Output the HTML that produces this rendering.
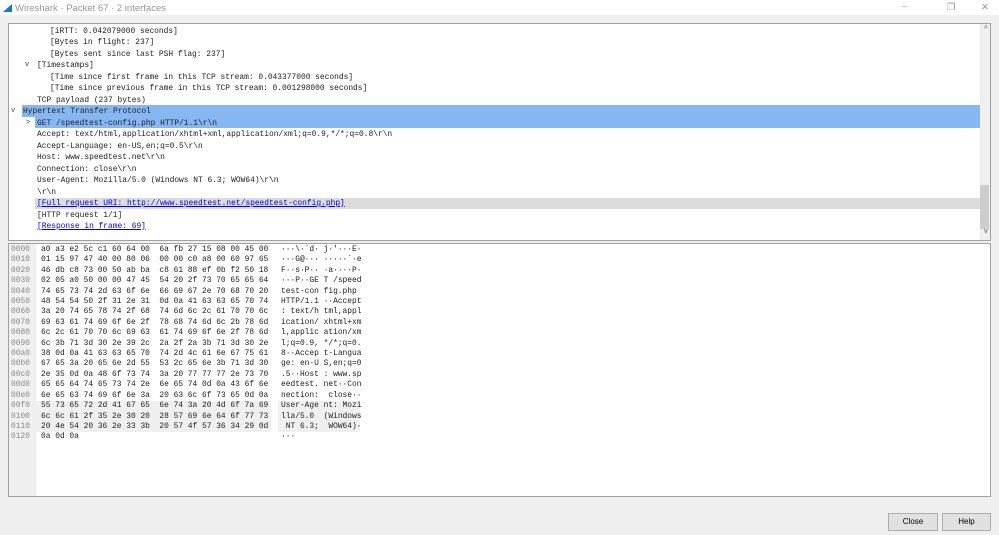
<!DOCTYPE html>
<html><head><meta charset="utf-8"><style>
*{margin:0;padding:0;box-sizing:border-box}
body{width:999px;height:535px;background:#f0f0f0;position:relative;overflow:hidden;font-family:"Liberation Mono",monospace}
.title{position:absolute;left:0;top:0;width:999px;height:15px;background:#fff}
.title span{position:absolute;left:15px;top:3px;font:9.5px "Liberation Sans",sans-serif;color:#999}
.pane{position:absolute;background:#fff;border:1px solid #a0a0a0}
.r{position:absolute;height:11.5px;line-height:13px;font-size:7.9px;color:#222;white-space:pre}
.sel{background:#86b7f3}
.gr{background:#dcdcdc}
a{color:#0000ee;text-decoration:underline}
.h{position:absolute;font-size:7.9px;line-height:10.4px;white-space:pre;color:#222}
.btn{position:absolute;top:513px;height:18px;background:#e1e1e1;border:1px solid #adadad;font:8px "Liberation Sans",sans-serif;text-align:center;line-height:16px;color:#000}
.ar{position:absolute;font-size:7px;color:#444;line-height:12px}
</style></head><body>
<div class="title"><svg style="position:absolute;left:3px;top:3px" width="10" height="9"><path d="M0 9 L9 1 L9 9 Z" fill="#1679c2"/></svg><span>Wireshark · Packet 67 · 2 interfaces</span>
<span style="left:902px;top:1px;color:#999">–</span><span style="left:947px;top:2px;color:#999">❐</span><span style="left:981px;top:2px;color:#999">✕</span></div>

<div class="pane" style="left:8px;top:23px;width:983px;height:218px;overflow:hidden">
<div style="position:absolute;right:0;top:0;width:10px;height:216px;background:#f0f0f0"></div>
<div style="position:absolute;right:1px;top:161px;width:9px;height:44px;background:#cdcdcd"></div>
<div style="position:absolute;right:2px;top:1px;font-size:7px;color:#555">^</div>
<div style="position:absolute;right:2px;top:204px;font-size:7px;color:#555">v</div>
</div>
<div class="r sel" style="left:22px;top:105px;width:958px"></div>
<div class="r sel" style="left:35px;top:116.5px;width:945px"></div>
<div class="r gr" style="left:35px;top:197.5px;width:945px"></div>
<div class="r" style="left:50px;top:24.5px">[iRTT: 0.042079000 seconds]</div>
<div class="r" style="left:50px;top:36px">[Bytes in flight: 237]</div>
<div class="r" style="left:50px;top:47.5px">[Bytes sent since last PSH flag: 237]</div>
<div class="ar" style="left:25px;top:59px">v</div>
<div class="r" style="left:37px;top:59px">[Timestamps]</div>
<div class="r" style="left:50px;top:70.5px">[Time since first frame in this TCP stream: 0.043377000 seconds]</div>
<div class="r" style="left:50px;top:82px">[Time since previous frame in this TCP stream: 0.001298000 seconds]</div>
<div class="r" style="left:37px;top:93.5px">TCP payload (237 bytes)</div>
<div class="ar" style="left:11px;top:105px">v</div>
<div class="r" style="left:23px;top:105px">Hypertext Transfer Protocol</div>
<div class="ar" style="left:26px;top:116.5px">&gt;</div>
<div class="r" style="left:37px;top:116.5px">GET /speedtest-config.php HTTP/1.1\r\n</div>
<div class="r" style="left:37px;top:128px">Accept: text/html,application/xhtml+xml,application/xml;q=0.9,*/*;q=0.8\r\n</div>
<div class="r" style="left:37px;top:139.5px">Accept-Language: en-US,en;q=0.5\r\n</div>
<div class="r" style="left:37px;top:151px">Host: www.speedtest.net\r\n</div>
<div class="r" style="left:37px;top:162.5px">Connection: close\r\n</div>
<div class="r" style="left:37px;top:174px">User-Agent: Mozilla/5.0 (Windows NT 6.3; WOW64)\r\n</div>
<div class="r" style="left:37px;top:185.5px">\r\n</div>
<div class="r" style="left:37px;top:197px"><a>[Full request URI: http://www.speedtest.net/speedtest-config.php]</a></div>
<div class="r" style="left:37px;top:208.5px">[HTTP request 1/1]</div>
<div class="r" style="left:37px;top:220px"><a>[Response in frame: 69]</a></div>

<div class="pane" style="left:8px;top:243px;width:983px;height:254px"></div>
<div style="position:absolute;left:9px;top:244px;width:27px;height:252px;background:#f0f0f0"></div>
<div style="position:absolute;left:36px;top:401px;width:235px;height:31px;background:#f0f0f0"></div>
<div style="position:absolute;left:278px;top:401px;width:82px;height:31px;background:#f0f0f0"></div>
<div class="h" style="left:11px;top:245px;color:#888">0000
0010
0020
0030
0040
0050
0060
0070
0080
0090
00a0
00b0
00c0
00d0
00e0
00f0
0100
0110
0120</div>
<div class="h" style="left:41px;top:245px">a0 a3 e2 5c c1 60 64 00  6a fb 27 15 08 00 45 00
01 15 97 47 40 00 80 06  00 00 c0 a8 00 60 97 65
46 db c8 73 00 50 ab ba  c8 61 88 ef 0b f2 50 18
02 05 a0 50 00 00 47 45  54 20 2f 73 70 65 65 64
74 65 73 74 2d 63 6f 6e  66 69 67 2e 70 68 70 20
48 54 54 50 2f 31 2e 31  0d 0a 41 63 63 65 70 74
3a 20 74 65 78 74 2f 68  74 6d 6c 2c 61 70 70 6c
69 63 61 74 69 6f 6e 2f  78 68 74 6d 6c 2b 78 6d
6c 2c 61 70 70 6c 69 63  61 74 69 6f 6e 2f 78 6d
6c 3b 71 3d 30 2e 39 2c  2a 2f 2a 3b 71 3d 30 2e
38 0d 0a 41 63 63 65 70  74 2d 4c 61 6e 67 75 61
67 65 3a 20 65 6e 2d 55  53 2c 65 6e 3b 71 3d 30
2e 35 0d 0a 48 6f 73 74  3a 20 77 77 77 2e 73 70
65 65 64 74 65 73 74 2e  6e 65 74 0d 0a 43 6f 6e
6e 65 63 74 69 6f 6e 3a  20 63 6c 6f 73 65 0d 0a
55 73 65 72 2d 41 67 65  6e 74 3a 20 4d 6f 7a 69
6c 6c 61 2f 35 2e 30 20  28 57 69 6e 64 6f 77 73
20 4e 54 20 36 2e 33 3b  20 57 4f 57 36 34 29 0d
0a 0d 0a</div>
<div class="h" style="left:281px;top:245px">···\·`d· j·'···E·
···G@··· ·····`·e
F··s·P·· ·a····P·
···P··GE T /speed
test-con fig.php 
HTTP/1.1 ··Accept
: text/h tml,appl
ication/ xhtml+xm
l,applic ation/xm
l;q=0.9, */*;q=0.
8··Accep t-Langua
ge: en-U S,en;q=0
.5··Host : www.sp
eedtest. net··Con
nection:  close··
User-Age nt: Mozi
lla/5.0  (Windows
 NT 6.3;  WOW64)·
···</div>

<div class="btn" style="left:888px;width:50px">Close</div>
<div class="btn" style="left:942px;width:49px">Help</div>
</body></html>
